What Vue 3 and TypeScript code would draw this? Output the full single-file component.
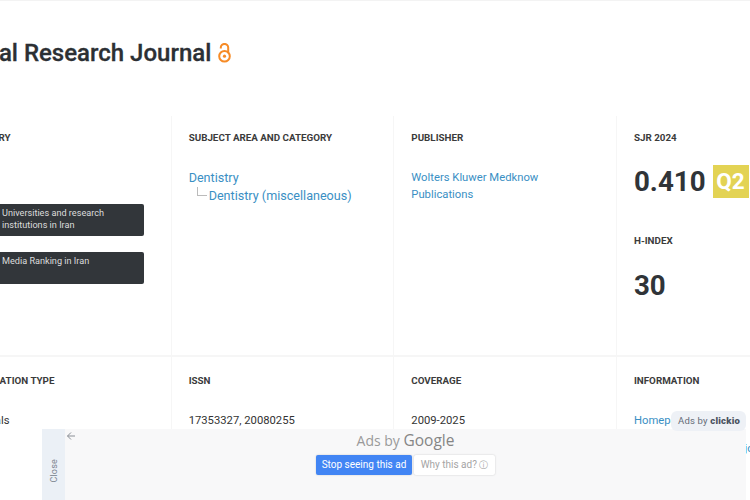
<script setup lang="ts">
const rankings: { id: number; text: string }[] = [
  { id: 1, text: "Universities and research institutions in Iran" },
  { id: 2, text: "Media Ranking in Iran" },
];
</script>

<template>
  <div class="page">
    <header class="head">
      <h1 class="title">Dental Research Journal</h1>
      <svg class="oa" width="13" height="20" viewBox="0 0 13 20" fill="none" stroke="#f68b26" stroke-width="2">
        <path d="M2.8 5.6V4.6a3.7 3.7 0 0 1 7.4 0v5.6" />
        <circle cx="6.5" cy="13.2" r="5.3" />
        <circle cx="6.5" cy="13.2" r="1.6" fill="#f68b26" stroke="none" />
      </svg>
    </header>

    <main class="grid">
      <section class="cell">
        <h2 class="label">COUNTRY</h2>
        <p class="plain">Iran</p>
        <div class="ranks">
          <div v-for="r in rankings" :key="r.id" class="rank">{{ r.text }}</div>
        </div>
      </section>
      <section class="cell">
        <h2 class="label">SUBJECT AREA AND CATEGORY</h2>
        <a class="area">Dentistry</a>
        <div class="sub">
          <span class="elbow"></span>
          <a class="area">Dentistry (miscellaneous)</a>
        </div>
      </section>
      <section class="cell">
        <h2 class="label">PUBLISHER</h2>
        <a class="link pub">Wolters Kluwer Medknow Publications</a>
      </section>
      <section class="cell">
        <h2 class="label">SJR 2024</h2>
        <div class="sjr">
          <span class="big">0.410</span>
          <span class="quart">Q2</span>
        </div>
        <h2 class="label hindex">H-INDEX</h2>
        <span class="big h">30</span>
      </section>

      <section class="cell bottom">
        <h2 class="label">PUBLICATION TYPE</h2>
        <p class="plain">Journals</p>
      </section>
      <section class="cell bottom">
        <h2 class="label">ISSN</h2>
        <p class="plain">17353327, 20080255</p>
      </section>
      <section class="cell bottom">
        <h2 class="label">COVERAGE</h2>
        <p class="plain">2009-2025</p>
      </section>
      <section class="cell bottom">
        <h2 class="label">INFORMATION</h2>
        <a class="link info">Homepage</a>
        <a class="link info">How to publish in this journal</a>
      </section>
    </main>

    <div class="badge">Ads by <b>clickio</b></div>

    <aside class="ad">
      <div class="close"><span>Close</span></div>
      <div class="adbody">
        <svg class="back" width="10" height="10" viewBox="0 0 10 10" fill="none" stroke="#8a8f96" stroke-width="1">
          <path d="M9 5H1.5M5 1.5 1.5 5 5 8.5" />
        </svg>
        <div class="adsby">Ads by <strong>Google</strong></div>
        <div class="adbtns">
          <button class="stop" type="button">Stop seeing this ad</button>
          <button class="why" type="button">Why this ad? <span class="i">ⓘ</span></button>
        </div>
      </div>
    </aside>
  </div>
</template>

<style scoped>
.page {
  position: relative;
  width: 750px;
  height: 500px;
  overflow: hidden;
  background: #fff;
  border-top: 1px solid #f3f3f3;
  box-sizing: border-box;
  font-family: Roboto, "Liberation Sans", sans-serif;
  color: #333;
}
.head {
  display: flex;
  align-items: center;
  gap: 7px;
  height: 115px;
  margin-left: -51px;
  padding-bottom: 12px;
  box-sizing: border-box;
}
.title {
  margin: 0;
  font-size: 24px;
  font-weight: 500;
  color: #2c3034;
  -webkit-text-stroke: 0.3px #2c3034;
  white-space: nowrap;
}
.oa {
  flex: none;
}
.grid {
  display: grid;
  grid-template-columns: repeat(4, 222.67px);
  grid-template-rows: 239px 1fr;
  margin-left: -51px;
  width: 900px;
}
.cell {
  box-sizing: border-box;
  padding: 16px 17px 0;
  border-right: 1.5px solid #f6f6f6;
  min-width: 0;
}
.cell:nth-child(4n) {
  border-right: 0;
}
.cell.bottom {
  border-top: 2px solid #f6f6f6;
  padding-top: 18px;
  height: 150px;
}
.label {
  margin: 0 0 25px;
  font-size: 9.8px;
  line-height: 12px;
  font-weight: 700;
  color: #3b3b3b;
  white-space: nowrap;
}
.plain {
  margin: 0;
  font-size: 11.25px;
  line-height: 18px;
  color: #333;
  white-space: nowrap;
}
.bottom .plain,
.bottom .label + .info {
  margin-top: 1px;
}
.ranks {
  display: flex;
  flex-direction: column;
  gap: 16px;
  margin-top: 17px;
}
.rank {
  width: 178px;
  height: 32px;
  padding: 3px 4px 0 36px;
  box-sizing: border-box;
  background: #32363a;
  border-radius: 2px;
  color: #dcdcdc;
  font-size: 9.15px;
  line-height: 12px;
}
.area {
  display: block;
  font-size: 12.6px;
  line-height: 17.5px;
  color: #3a8fc4;
}
.sub {
  display: flex;
  align-items: flex-start;
  padding-left: 8px;
}
.elbow {
  width: 9px;
  height: 8px;
  margin-right: 2px;
  border-left: 1px solid #bbb;
  border-bottom: 1px solid #bbb;
  flex: none;
}
.link {
  display: block;
  font-size: 11.25px;
  line-height: 17px;
  color: #3a8fc4;
}
.pub {
  margin-top: 1px;
}
.info {
  margin-bottom: 11px;
}
.sjr {
  display: flex;
  align-items: center;
  gap: 7px;
  margin-top: -4px;
  white-space: nowrap;
}
.big {
  font-size: 27.7px;
  line-height: 33px;
  font-weight: 700;
  color: #303438;
}
.quart {
  flex: none;
  width: 36px;
  height: 33px;
  background: #e3d354;
  color: #fff;
  font-size: 22.5px;
  font-weight: 700;
  line-height: 33px;
  text-align: center;
}
.hindex {
  margin-top: 37px;
}
.h {
  display: block;
  margin-top: -3px;
}
.badge {
  position: absolute;
  left: 671px;
  top: 410px;
  width: 75px;
  height: 20px;
  box-sizing: border-box;
  padding-left: 7px;
  border-radius: 6px;
  background: #eef1f6;
  color: #646b76;
  font-size: 9.5px;
  line-height: 20px;
  letter-spacing: 0.2px;
  white-space: nowrap;
  z-index: 2;
}
.badge b {
  color: #4a5260;
  font-weight: 900;
}
.ad {
  position: absolute;
  left: 42px;
  top: 428px;
  width: 704px;
  height: 71px;
  display: flex;
  background: #f8f8f9;
}
.close {
  width: 23px;
  flex: none;
  box-sizing: border-box;
  padding-top: 12px;
  background: #ebf0f6;
  display: flex;
  align-items: center;
  justify-content: center;
}
.close span {
  writing-mode: vertical-rl;
  transform: rotate(180deg);
  font-size: 9px;
  letter-spacing: 0.2px;
  color: #7d8590;
}
.adbody {
  position: relative;
  flex: 1;
  display: flex;
  flex-direction: column;
  align-items: center;
}
.back {
  position: absolute;
  left: 1px;
  top: 2px;
}
.adsby {
  height: 22px;
  font-size: 14px;
  line-height: 22px;
  color: #9a9a9a;
  font-family: "Open Sans", Roboto, sans-serif;
}
.adsby strong {
  font-size: 15.5px;
  font-weight: 500;
  color: #858585;
}
.adbtns {
  display: flex;
  margin-top: 4px;
}
.stop,
.why {
  height: 20px;
  padding: 0;
  border: 0;
  border-radius: 2px;
  font-family: Roboto, "Liberation Sans", sans-serif;
  font-size: 10px;
  line-height: 20px;
  box-shadow: 0 0 2px rgba(0, 0, 0, 0.2);
  white-space: nowrap;
}
.stop {
  width: 96px;
  background: #4285f4;
  color: #fff;
}
.why {
  width: 81px;
  margin-left: 2px;
  background: #fff;
  color: #a5a5a5;
}
.i {
  font-size: 9px;
}
</style>
